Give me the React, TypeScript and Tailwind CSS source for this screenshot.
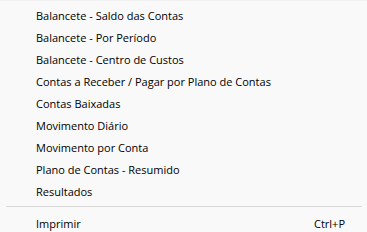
import React from "react";

const items = [
  "Balancete - Saldo das Contas",
  "Balancete - Por Período",
  "Balancete - Centro de Custos",
  "Contas a Receber / Pagar por Plano de Contas",
  "Contas Baixadas",
  "Movimento Diário",
  "Movimento por Conta",
  "Plano de Contas - Resumido",
  "Resultados",
];

export default function App() {
  return (
    <div
      className="w-[367px] h-[232px] bg-[#f9f9f9] border-t border-[#f0f0f0] overflow-hidden text-[11px] text-[#000000] flex flex-col pt-[3px]"
      style={{ fontFamily: '"Segoe UI", "Open Sans", sans-serif' }}
    >
      {items.map((t) => (
        <div key={t} className="h-[22px] shrink-0 flex items-center pl-[36px] leading-none">
          {t}
        </div>
      ))}
      <div className="h-[10px] shrink-0 pt-[4px] pl-[6px] pr-[5px]">
        <div className="h-px w-full bg-[#d9d9d9]" />
      </div>
      <div className="h-[22px] shrink-0 flex items-center pl-[36px] pr-[22px] justify-between leading-none">
        <span>Imprimir</span>
        <span>Ctrl+P</span>
      </div>
    </div>
  );
}
